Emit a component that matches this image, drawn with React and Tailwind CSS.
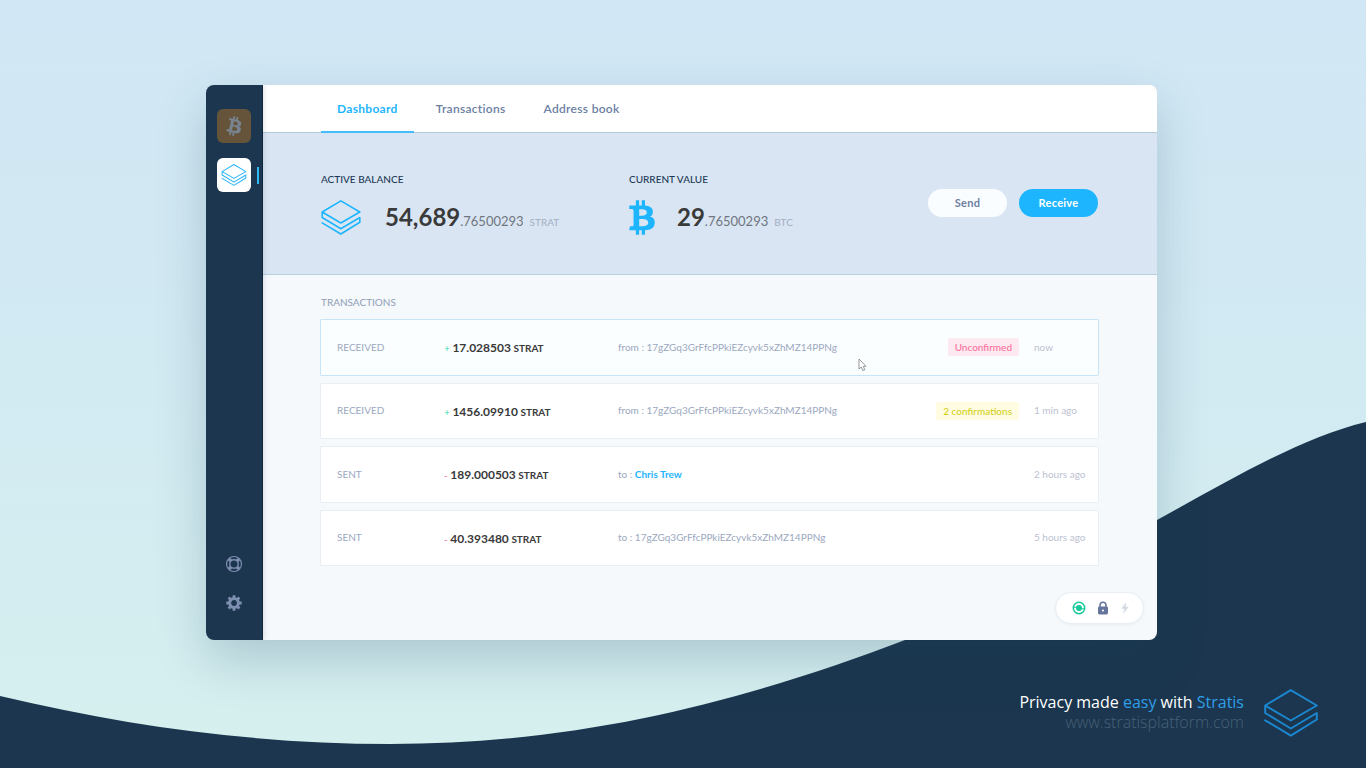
import React from "react";
import { FaBtc } from "react-icons/fa";

function StratisMark({ className, stroke = 2 }) {
  return (
    <svg viewBox="0 0 54 48" className={className} fill="none" stroke="currentColor" strokeWidth={stroke} strokeLinejoin="round" strokeLinecap="round" aria-hidden="true">
      <path d="M1.2 16.5 26.8 1.2 52.8 16.5 26.8 31.5 1.2 16.5V24L26.8 39.5 52.8 24V30.5L26.8 46.6 1.2 31.3" />
    </svg>
  );
}

function BitcoinMark({ className }) {
  return (
    <svg viewBox="7 5 18 22" className={className} fill="currentColor" aria-hidden="true">
      <path d="M23.189 14.02c.314-2.096-1.283-3.223-3.465-3.975l.708-2.84-1.728-.43-.69 2.765c-.454-.114-.92-.22-1.385-.326l.695-2.783L15.596 6l-.708 2.839c-.376-.086-.746-.17-1.104-.26l.002-.009-2.384-.595-.46 1.846s1.283.294 1.256.312c.7.175.826.638.805 1.006l-.806 3.235c.048.012.11.03.18.057l-.183-.045-1.13 4.532c-.086.212-.303.531-.793.41.018.025-1.256-.313-1.256-.313l-.858 1.978 2.25.561c.418.105.828.215 1.231.318l-.715 2.872 1.727.43.708-2.84c.472.127.93.245 1.378.357l-.706 2.828 1.728.43.715-2.866c2.948.558 5.164.333 6.097-2.333.752-2.146-.037-3.385-1.588-4.192 1.13-.26 1.98-1.003 2.207-2.538zm-3.95 5.538c-.533 2.147-4.148.986-5.32.695l.95-3.805c1.172.293 4.929.872 4.37 3.11zm.535-5.569c-.487 1.953-3.495.96-4.47.717l.86-3.45c.975.243 4.118.696 3.61 2.733z" />
    </svg>
  );
}

function LifeRing({ className }) {
  return (
    <svg viewBox="0 0 18 18" className={className} fill="none" stroke="currentColor" aria-hidden="true">
      <circle cx="9" cy="9" r="7.5" strokeWidth="1.2" />
      <circle cx="9" cy="9" r="4.2" strokeWidth="1.4" />
      <path d="M3.9 3.9 6 6M12 6l2.1-2.1M3.9 14.1 6 12M12 12l2.1 2.1" strokeWidth="3.4" />
    </svg>
  );
}

function Gear({ className }) {
  return (
    <svg viewBox="0 0 16 16" className={className} fill="none" stroke="currentColor" aria-hidden="true">
      <circle cx="8" cy="8" r="4.4" strokeWidth="3" />
      <path d="M8 .3v3M8 12.700v3M.3 8h3M12.700 8h3M2.600 2.600l2 2M11.400 11.400l2 2M13.400 2.600l-2 2M4.600 11.400l-2 2" strokeWidth="2.8" />
    </svg>
  );
}

function SyncBadge({ className }) {
  return (
    <svg viewBox="0 0 14 14" className={className} fill="none" stroke="currentColor" aria-hidden="true">
      <circle cx="7" cy="7" r="5.7" strokeWidth="1.5" />
      <circle cx="7" cy="7" r="3" fill="currentColor" stroke="none" />
      <path d="M2 6.200h3M9 7.800h3" strokeWidth="1.1" />
    </svg>
  );
}

function Padlock({ className }) {
  return (
    <svg viewBox="0 0 12 14" className={className} aria-hidden="true">
      <path d="M3 6.500V4.200a3 3 0 0 1 6 0v2.300" fill="none" stroke="currentColor" strokeWidth="1.6" />
      <rect x="1" y="5.600" width="10" height="7.800" rx="1.400" fill="currentColor" />
      <circle cx="6" cy="9.400" r="1" fill="#fff" />
    </svg>
  );
}

function Bolt({ className }) {
  return (
    <svg viewBox="0 0 10 14" className={className} fill="currentColor" aria-hidden="true">
      <path d="M6.300 1 1.200 7.800h3L3.200 13l5.600-7.200H5.600z" />
    </svg>
  );
}

const tabs = [
  { name: "Dashboard", active: true },
  { name: "Transactions" },
  { name: "Address book" },
];

const address = "17gZGq3GrFfcPPkiEZcyvk5xZhMZ14PPNg";

const transactions = [
  { kind: "RECEIVED", sign: "+", amount: "17.028503", way: "from", party: address, badge: "Unconfirmed", tone: "bg-[#fdeaf1] text-[#fb6f9b]", time: "now", active: true },
  { kind: "RECEIVED", sign: "+", amount: "1456.09910", way: "from", party: address, badge: "2 confirmations", tone: "bg-[#fffce2] text-[#d3d021]", time: "1 min ago" },
  { kind: "SENT", sign: "-", amount: "189.000503", way: "to", party: "Chris Trew", contact: true, time: "2 hours ago" },
  { kind: "SENT", sign: "-", amount: "40.393480", way: "to", party: address, time: "5 hours ago" },
];

function TransactionRow({ tx }) {
  const cell = tx.active
    ? "border-y border-[#c9e3f7] bg-[#fbfeff] p-0 align-middle"
    : "border-y border-[#e8eef4] bg-white p-0 align-middle";
  return (
    <tr>
      <td className={cell + " rounded-l-[2px] border-l pl-4 text-[#9ba8c0]"}>{tx.kind}</td>
      <td className={cell + " pt-[2px] text-[#3a3a3a]"}>
        <span className={tx.sign === "+" ? "text-[#43e0b5]" : "text-[#fb6f9b]"}>{tx.sign}</span>{" "}
        <span className="text-[12px] font-bold">{tx.amount}</span>{" "}
        <span className="font-bold">STRAT</span>
      </td>
      <td className={cell + " text-[#9ba8c0]"}>
        {tx.way} :{" "}
        {tx.contact ? (
          <a href="#chris-trew" className="font-bold text-[#1eb5ff]">{tx.party}</a>
        ) : (
          tx.party
        )}
      </td>
      <td className={cell + " text-right"}>
        {tx.badge && (
          <span className={"inline-block rounded-[2px] px-[7px] font-medium leading-[18px] " + tx.tone}>{tx.badge}</span>
        )}
      </td>
      <td className={cell + " rounded-r-[2px] border-r pl-[15px] text-[#bcc1d2]"}>{tx.time}</td>
    </tr>
  );
}

function Balance({ title, icon, whole, fraction, unit }) {
  return (
    <section>
      <h2 className="text-[10px] font-medium leading-[14px] text-[#1c3a55]">{title}</h2>
      <div className="mt-[13px] flex h-9 items-center">
        {icon}
        <p className="flex items-baseline leading-none text-[#6f7680]">
          <span className="text-[24px] font-bold text-[#3a3a3a]">{whole}</span>
          <span className="text-[13px]">{fraction}</span>
          <span className="ml-[6px] text-[10px] text-[#a3afc2]">{unit}</span>
        </p>
      </div>
    </section>
  );
}

export default function App() {
  return (
    <div className="relative isolate flex min-h-screen flex-col bg-linear-to-b from-[#d1e7f5] via-[#d2eaf2] to-[#d6f0ef] font-['Lato',sans-serif]">
      <svg className="absolute inset-0 -z-10 h-full w-full" viewBox="0 0 1366 768" preserveAspectRatio="none" aria-hidden="true">
        <path d="M0 696C130 727 260 744 390 744C590 744 755 697 905 640C1000 605 1080 562 1157 520C1230 480 1300 438 1366 422V768H0Z" fill="#1b364e" />
      </svg>

      <div className="flex flex-col pt-[85px] pr-[209px] pl-[206px]">
        <div className="flex overflow-hidden rounded-lg bg-[#f5f9fc] shadow-[0_20px_50px_rgba(27,70,95,0.22)]">
          <aside className="relative flex w-[57px] shrink-0 flex-col items-center border-r border-[#10263c] bg-[#1b364e] pt-6 pb-[29px] shadow-[1px_0_5px_rgba(27,54,78,0.15)]">
            <button aria-label="Bitcoin wallet" className="flex size-[34px] items-center justify-center rounded-md bg-[#65543a] text-[#78838f]">
              <BitcoinMark className="h-[22px] w-[18px]" />
            </button>
            <div className="mt-[15px] flex w-full items-center justify-end gap-[6px] pr-[3px]">
              <button aria-label="Stratis wallet" className="flex size-[34px] items-center justify-center rounded-md bg-white text-[#27b4f8]">
                <StratisMark className="h-[22px] w-[26px]" stroke={2.2} />
              </button>
              <span className="h-[17px] w-[2px] bg-[#2fb9f5]" />
            </div>
            <div className="mt-auto flex flex-col items-center gap-[22px] text-[#7d8eb0]">
              <button aria-label="Help"><LifeRing className="size-[18px]" /></button>
              <button aria-label="Settings"><Gear className="size-4" /></button>
            </div>
          </aside>

          <main className="flex min-w-0 flex-1 flex-col">
            <nav className="flex h-12 gap-[6px] border-b border-[#b3c8da] bg-white pl-[58px]">
              {tabs.map((tab) => (
                <a
                  key={tab.name}
                  href="#"
                  className={
                    tab.active
                      ? "-mb-px flex items-center border-b-2 border-[#43bdfb] px-4 pt-[2px] text-[12px] font-bold tracking-wide text-[#1eb5ff]"
                      : "flex items-center px-4 text-[12px] font-semibold tracking-wide text-[#6c7fa3]"
                  }
                >
                  {tab.name}
                </a>
              ))}
            </nav>

            <div className="flex items-start border-b border-[#b9cedf] bg-[#d9e5f3] pt-[39px] pr-[59px] pb-[39px] pl-[58px]">
              <div className="w-[308px]">
                <Balance
                  title="ACTIVE BALANCE"
                  icon={<StratisMark className="mr-6 h-[35px] w-10 text-[#1eb5ff]" stroke={2.2} />}
                  whole="54,689"
                  fraction=".76500293"
                  unit="STRAT"
                />
              </div>
              <Balance
                title="CURRENT VALUE"
                icon={<FaBtc className="mr-[22px] h-[35px] w-[26px] text-[#1eb5ff]" />}
                whole="29"
                fraction=".76500293"
                unit="BTC"
              />
              <div className="mt-[17px] ml-auto flex gap-3 text-[11px] font-bold tracking-wide">
                <button className="h-7 w-[79px] rounded-full bg-[#fafdff] text-[#6c7fa3]">Send</button>
                <button className="h-7 w-[79px] rounded-full bg-[#1eb5ff] text-white">Receive</button>
              </div>
            </div>

            <section className="pt-[20px] pr-[58px] pl-[57px]">
              <h2 className="pl-px text-[10px] leading-[14px] text-[#8f9db5]">TRANSACTIONS</h2>
              <table className="mt-[3px] h-[261px] w-full table-fixed border-separate border-spacing-x-0 border-spacing-y-[7px] text-[10px]">
                <colgroup>
                  <col className="w-[124px]" />
                  <col className="w-[174px]" />
                  <col />
                  <col className="w-[120px]" />
                  <col className="w-20" />
                </colgroup>
                <tbody>
                  {transactions.map((tx, i) => (
                    <TransactionRow key={i} tx={tx} />
                  ))}
                </tbody>
              </table>
            </section>

            <div className="mt-[19px] mr-[13px] mb-4 flex h-8 items-center gap-[11px] self-end rounded-full border border-[#e8eef4] bg-white pr-[13px] pl-4 shadow-[0_1px_3px_rgba(27,70,95,0.06)]">
              <SyncBadge className="size-[14px] text-[#15c99b]" />
              <Padlock className="h-[14px] w-3 text-[#66759b]" />
              <Bolt className="h-[14px] w-[10px] text-[#d5dae4]" />
            </div>
          </main>
        </div>
      </div>

      <footer className="mt-auto flex items-center justify-end gap-5 pr-12 pb-[31px] font-['Open_Sans',sans-serif] text-[16px] leading-5">
        <div className="pb-[3px] text-right">
          <p className="text-white">
            Privacy made <span className="text-[#2f9fe8]">easy</span> with <span className="text-[#2f9fe8]">Stratis</span>
          </p>
          <a href="#site" className="font-light text-[#476078]">www.stratisplatform.com</a>
        </div>
        <StratisMark className="h-12 w-[54px] text-[#1b87d0]" />
      </footer>

      <svg className="absolute top-[358px] left-[858px] h-[14px] w-[9px]" viewBox="0 0 9 14" aria-hidden="true">
        <path d="M1 1v10l2.3-2 1.6 3.6 1.9-.8L5.3 8.300H8z" fill="#fff" stroke="#7a7f86" strokeWidth="0.8" />
      </svg>
    </div>
  );
}
